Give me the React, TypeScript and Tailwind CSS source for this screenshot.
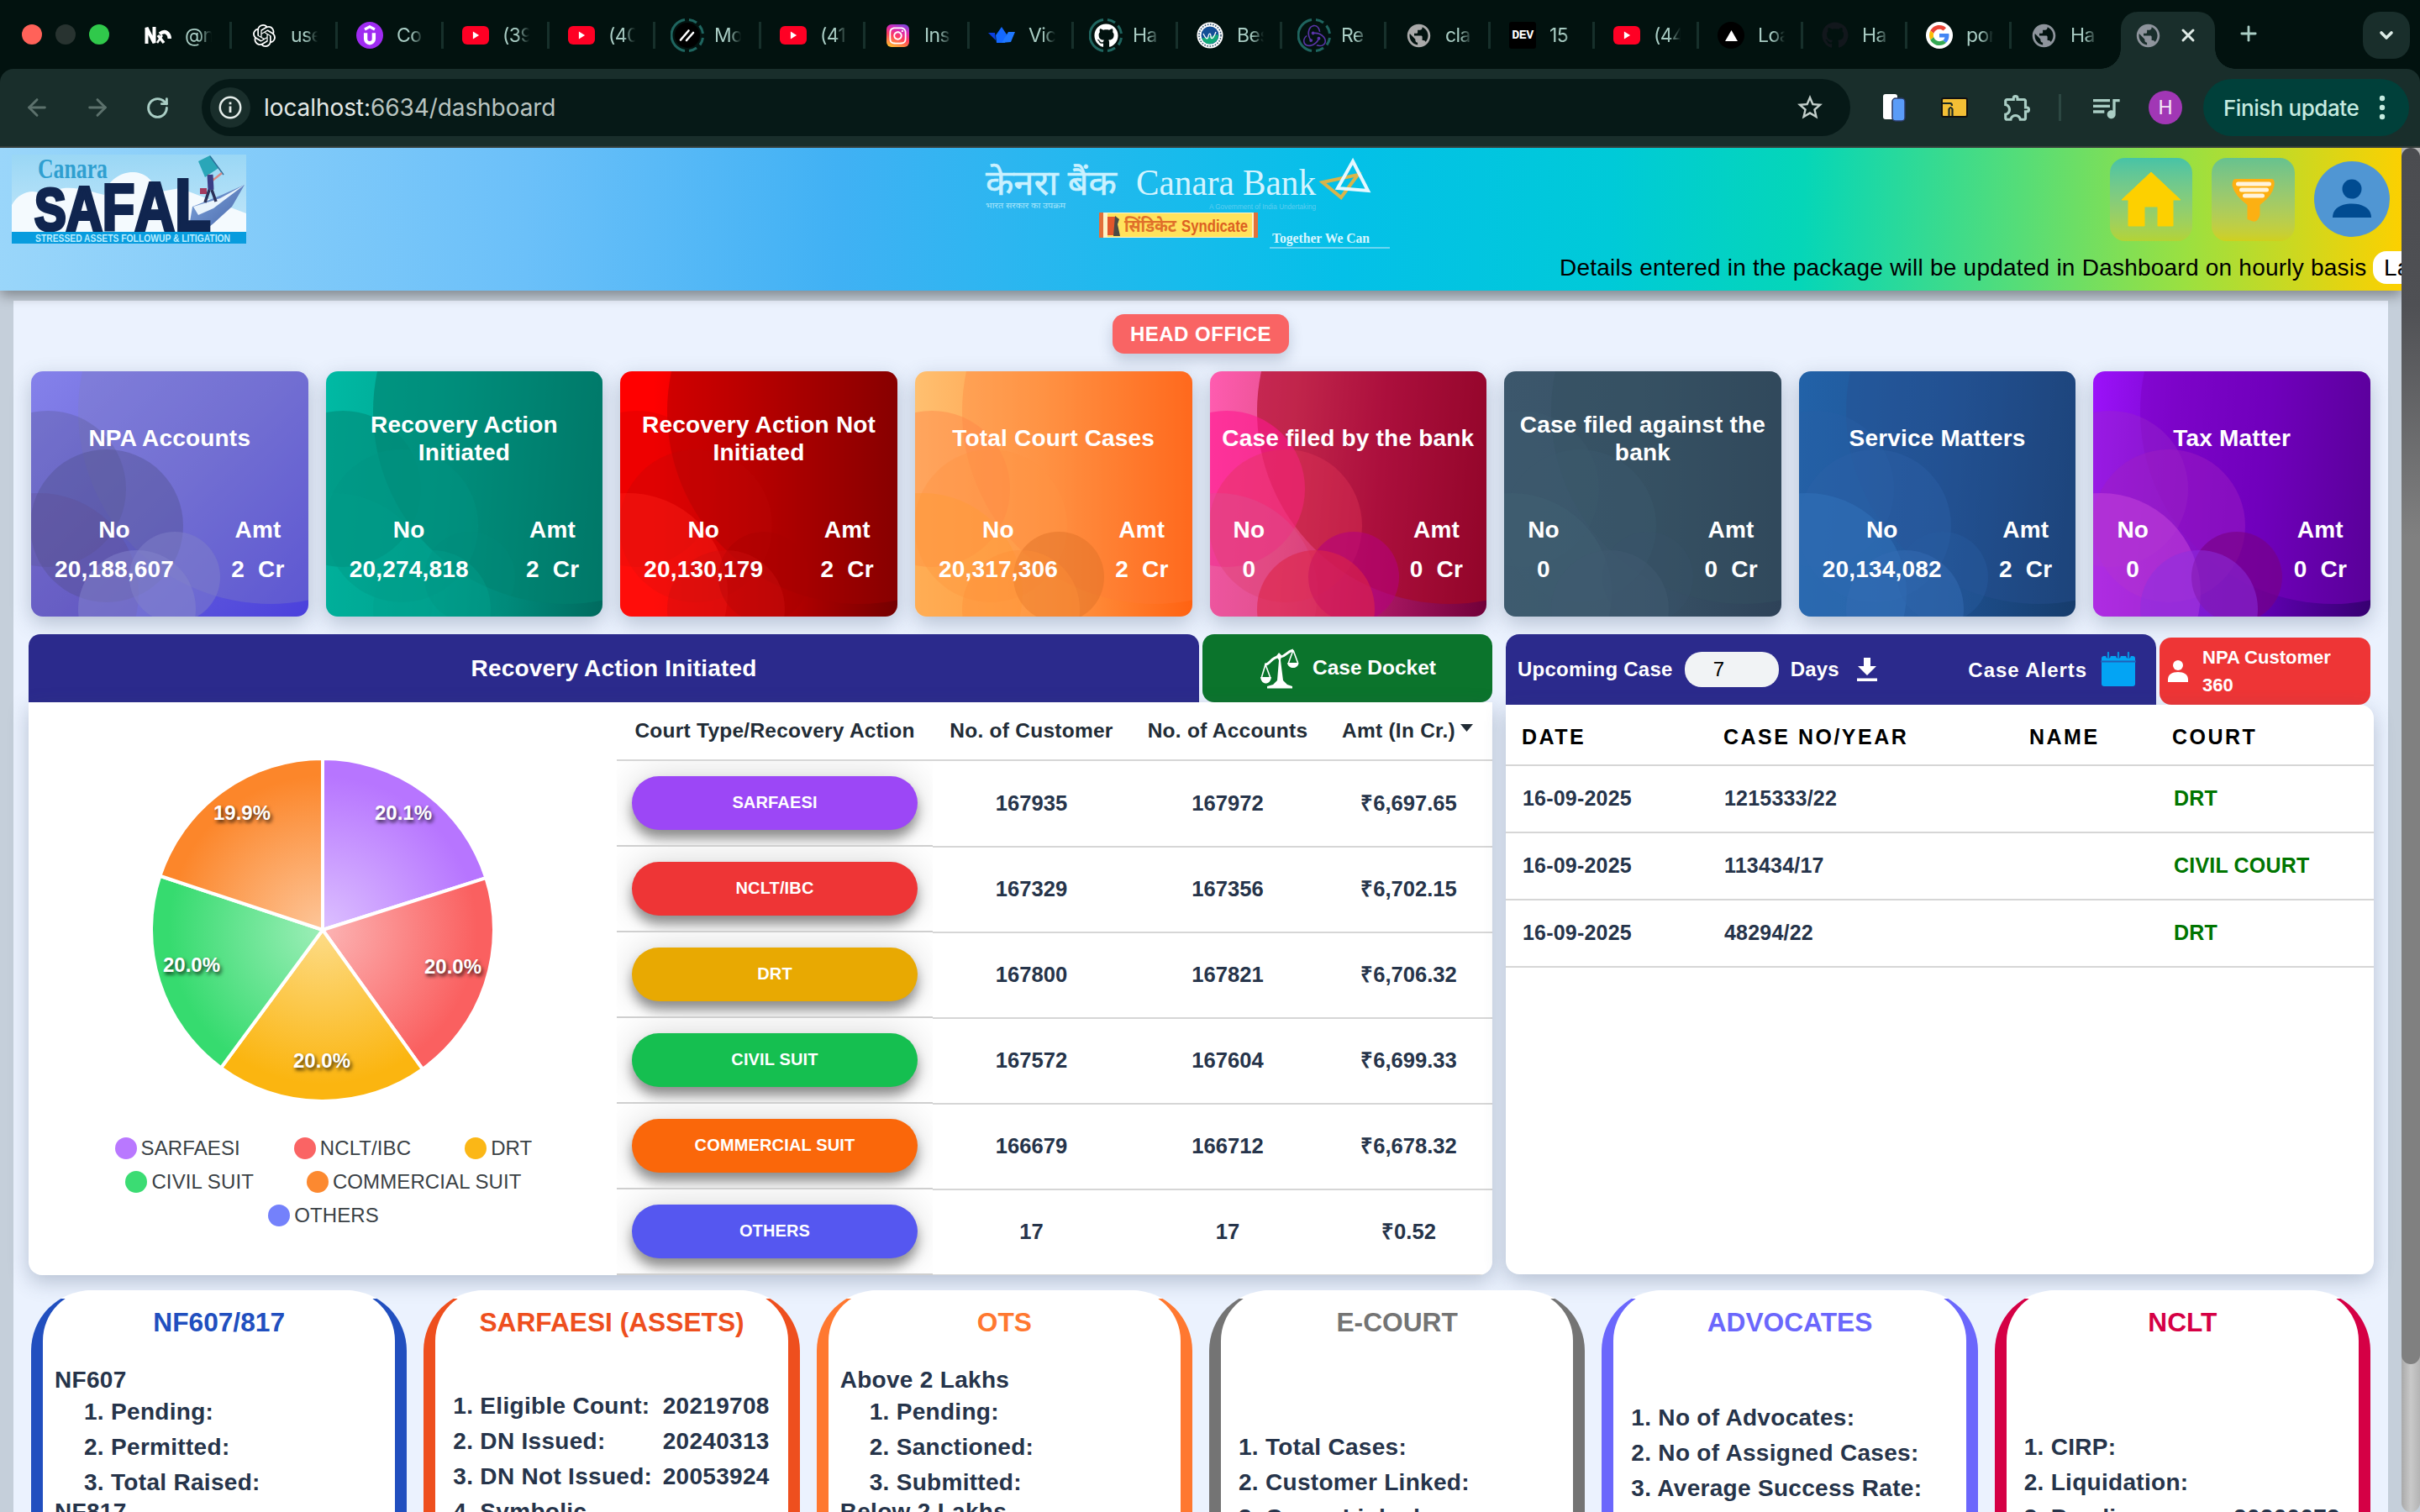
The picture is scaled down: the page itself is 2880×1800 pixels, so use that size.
import React from "react";
import { FaGithub, FaInstagram } from "react-icons/fa";
import { MdPublic, MdOutlineExtension, MdStarBorder, MdQueueMusic } from "react-icons/md";
import { SiOpenai, SiRedux } from "react-icons/si";
import { ArrowLeft, ArrowRight, RotateCw, X, Plus, ChevronDown } from "lucide-react";

/* ---------- Browser chrome ---------- */

function YouTube() {
  return (
    <div className="flex h-[22px] w-8 items-center justify-center rounded-[6px] bg-[#ff0024]">
      <svg viewBox="0 0 10 10" className="h-[10px] w-[9px]"><path d="M1 0 L9 5 L1 10Z" fill="#fff" /></svg>
    </div>
  );
}

function Ring({ children }: { children: React.ReactNode }) {
  return (
    <div className="relative flex h-10 w-10 shrink-0 items-center justify-center">
      <svg viewBox="0 0 40 40" className="absolute inset-0 h-10 w-10" fill="none" stroke="#1f655f" strokeWidth="3">
        <path d="M17 38.5 A18.7 18.7 0 0 1 17 1.5" />
        <path d="M22 1.5 A18.7 18.7 0 0 1 31 5" />
        <path d="M34.5 8.5 A18.7 18.7 0 0 1 38.5 18" />
        <path d="M38.5 23 A18.7 18.7 0 0 1 35 31.5" />
        <path d="M31 35 A18.7 18.7 0 0 1 22 38.5" />
      </svg>
      {children}
    </div>
  );
}

function GoogleG() {
  return (
    <div className="flex h-8 w-8 items-center justify-center rounded-full bg-white">
      <svg viewBox="0 0 48 48" className="h-6 w-6">
        <path fill="#EA4335" d="M24 9.5c3.54 0 6.71 1.22 9.21 3.6l6.85-6.85C35.9 2.38 30.47 0 24 0 14.62 0 6.51 5.38 2.56 13.22l7.98 6.19C12.43 13.72 17.74 9.5 24 9.5z" />
        <path fill="#4285F4" d="M46.98 24.55c0-1.57-.15-3.09-.38-4.55H24v9.02h12.94c-.58 2.96-2.26 5.48-4.78 7.18l7.73 6c4.51-4.18 7.09-10.36 7.09-17.65z" />
        <path fill="#FBBC05" d="M10.53 28.59c-.48-1.45-.76-2.99-.76-4.59s.27-3.14.76-4.59l-7.98-6.19C.92 16.46 0 20.12 0 24c0 3.88.92 7.54 2.56 10.78l7.97-6.19z" />
        <path fill="#34A853" d="M24 48c6.48 0 11.93-2.13 15.89-5.81l-7.73-6c-2.15 1.45-4.92 2.3-8.16 2.3-6.26 0-11.57-4.22-13.47-9.91l-7.98 6.19C6.51 42.62 14.62 48 24 48z" />
      </svg>
    </div>
  );
}

function Globe({ className }: { className: string }) {
  return <MdPublic className={className} />;
}

const tabs: { label: string; icon: React.ReactNode }[] = [
  {
    label: "@n",
    icon: (
      <svg viewBox="0 0 32 22" className="h-[22px] w-8" fill="none" stroke="#fff">
        <path d="M2.5 21 V2 L11.500 20 V1" strokeWidth="4" />
        <path d="M15 20 L21 11" strokeWidth="2.500" />
        <path d="M16 11 L23 20" strokeWidth="3.500" />
        <path d="M18 9.500 C25 4 29.500 9 29.800 15" strokeWidth="4.500" />
      </svg>
    ),
  },
  { label: "use", icon: <SiOpenai className="h-[27px] w-[27px] text-white" /> },
  {
    label: "Co",
    icon: (
      <div className="flex h-8 w-8 items-center justify-center rounded-full bg-[#a02bf2]">
        <svg viewBox="0 0 24 24" className="h-[26px] w-[26px]" fill="none" stroke="#fff" strokeWidth="4">
          <path d="M6.500 5.500 L12 2.600 L17.500 5.500" strokeWidth="3" />
          <path d="M7.500 9.500 V16 a4.500 4.500 0 0 0 9 0 V9.500" />
        </svg>
      </div>
    ),
  },
  { label: "(39", icon: <YouTube /> },
  { label: "(40", icon: <YouTube /> },
  {
    label: "Mo",
    icon: (
      <Ring>
        <div className="flex h-[30px] w-[30px] items-center justify-center rounded-full bg-black">
          <svg viewBox="0 0 20 16" className="h-4 w-5" stroke="#fff" strokeWidth="2.600" strokeLinecap="round">
            <path d="M2 13.500 L11.500 2.500 M9 14 L17 5" />
          </svg>
        </div>
      </Ring>
    ),
  },
  { label: "(41", icon: <YouTube /> },
  {
    label: "Ins",
    icon: (
      <div className="flex h-[27px] w-[27px] items-center justify-center rounded-[6px] bg-[linear-gradient(20deg,#ffc02e_5%,#ff3a5e_45%,#d829b6_70%,#6a4de8_100%)]">
        <FaInstagram className="h-[23px] w-[23px] text-white" />
      </div>
    ),
  },
  {
    label: "Vic",
    icon: (
      <svg viewBox="0 0 32 20" className="h-5 w-8">
        <path d="M0 7 L8 7 L9 16Z" fill="#0b3fe0" />
        <path d="M10 19 L9 10 L16 0 L22 9 L20 19Z" fill="#1469ff" />
        <path d="M16 19 L24 6 L32 6 L27 18Z" fill="#1f78ff" />
      </svg>
    ),
  },
  { label: "Ha", icon: <Ring><FaGithub className="h-[29px] w-[29px] text-white" /></Ring> },
  {
    label: "Bes",
    icon: (
      <svg viewBox="0 0 32 32" className="h-8 w-8">
        <circle cx="16" cy="16" r="15.500" fill="#fff" />
        <circle cx="16" cy="16" r="13" fill="none" stroke="#35546f" strokeWidth="1.600" strokeDasharray="1.600 1.600" />
        <circle cx="16" cy="16" r="10.500" fill="#134f96" />
        <path d="M6 19 C12 20 18 16 26 15 A10.500 10.500 0 0 1 8 23Z" fill="#12a878" />
        <path d="M8 14 C11 20 13 22 14 17 C15 13 17 13 17 18 C18 22 21 18 23 12" stroke="#fff" strokeWidth="1.300" fill="none" />
      </svg>
    ),
  },
  { label: "Re", icon: <Ring><SiRedux className="h-[27px] w-[27px] text-[#5a35a8]" /></Ring> },
  { label: "cla", icon: <Globe className="h-[33px] w-[33px] text-[#a9a9a9]" /> },
  {
    label: "15",
    icon: (
      <div className="flex h-8 w-8 items-center justify-center rounded-[3px] bg-black font-['Liberation_Mono'] text-[15px] font-bold leading-none tracking-[-0.5px] text-white">
        DEV
      </div>
    ),
  },
  { label: "(44", icon: <YouTube /> },
  {
    label: "Loa",
    icon: (
      <div className="flex h-8 w-8 items-center justify-center rounded-full bg-black">
        <svg viewBox="0 0 16 14" className="h-[13px] w-[15px]"><path d="M8 0 L16 14 H0Z" fill="#fff" /></svg>
      </div>
    ),
  },
  { label: "Ha", icon: <FaGithub className="h-8 w-8 text-[#12171c]" /> },
  { label: "por", icon: <GoogleG /> },
  { label: "Ha", icon: <Globe className="h-[33px] w-[33px] text-[#8e949c]" /> },
];

function TabStrip() {
  return (
    <div className="flex h-[82px] w-full items-start bg-[#02120f]">
      <div className="flex h-[82px] w-[150px] shrink-0 items-center gap-4 pl-[26px]">
        <div className="h-6 w-6 rounded-full bg-[#ff6259]" />
        <div className="h-6 w-6 rounded-full bg-[#283330]" />
        <div className="h-6 w-6 rounded-full bg-[#30c94b]" />
      </div>
      {tabs.map((t, i) => (
        <div key={i} className={(i < 6 ? "w-[126px]" : "w-[124px]") + " flex h-[84px] shrink-0 items-center"}>
          <div className="ml-[18px] flex w-10 justify-center">{t.icon}</div>
          <div className="ml-[12px] w-[34px] overflow-hidden whitespace-nowrap font-[Inter] text-[23px] tracking-[-0.6px] text-[#a9cdc4] [mask-image:linear-gradient(90deg,#000_50%,transparent_95%)]">
            {t.label}
          </div>
          {i < tabs.length - 1 && <div className="ml-auto h-8 w-[3px] bg-[#17302b]" />}
        </div>
      ))}
      <div className="relative ml-[6px] mt-[14px] flex h-[68px] w-[112px] shrink-0 items-center rounded-t-[20px] bg-[#192e2b] pb-3">
        <div className="absolute bottom-0 -left-6 h-6 w-6 bg-[radial-gradient(circle_at_0_0,transparent_23.500px,#192e2b_24px)]" />
        <div className="absolute bottom-0 -right-6 h-6 w-6 bg-[radial-gradient(circle_at_100%_0,transparent_23.500px,#192e2b_24px)]" />
        <Globe className="ml-4 h-[33px] w-[33px] text-[#8e949c]" />
        <X className="ml-[19px] h-6 w-6 text-[#dfeae6]" strokeWidth={3} />
      </div>
      <Plus className="ml-[26px] mt-[26px] h-7 w-7 shrink-0 text-[#a9cdc4]" strokeWidth={2.4} />
      <div className="ml-auto mr-3 mt-[14px] flex h-14 w-14 shrink-0 items-center justify-center rounded-[20px] bg-[#192e2b]">
        <ChevronDown className="h-6 w-6 text-[#dcebe6]" strokeWidth={3.6} />
      </div>
    </div>
  );
}

function Toolbar() {
  return (
    <div className="h-[94px] w-full bg-[#02120f]">
      <div className="flex h-[94px] items-center rounded-t-[16px] border-b-2 border-[#333d3a] bg-[#192e2b]">
        <ArrowLeft className="ml-[28px] h-8 w-8 shrink-0 text-[#5c716c]" strokeWidth={2.2} />
        <ArrowRight className="ml-[40px] h-8 w-8 shrink-0 text-[#5c716c]" strokeWidth={2.2} />
        <RotateCw className="ml-[41px] h-[29px] w-[29px] shrink-0 text-[#a9cdc4]" strokeWidth={2.4} />
        <div className="ml-[38px] flex h-[68px] w-[1962px] shrink-0 items-center rounded-full bg-[#061917]">
          <div className="ml-[10px] flex h-12 w-12 items-center justify-center rounded-full bg-[#192e2b]">
            <svg viewBox="0 0 28 28" className="h-7 w-7" fill="none" stroke="#e6eeeb" strokeWidth="2.500">
              <circle cx="14" cy="14" r="12.200" />
              <path d="M14 12.500 V20" strokeWidth="2.800" />
              <path d="M14 7.500 V10.300" strokeWidth="2.800" />
            </svg>
          </div>
          <div className="ml-[16px] font-[Inter] text-[28px] tracking-[-0.08px] text-[#e2e8e6]">
            localhost:<span className="text-[#b9c4c0]">6634/dashboard</span>
          </div>
          <MdStarBorder className="ml-auto mr-[30px] h-9 w-9 text-[#c3cfcb]" />
        </div>
        <svg viewBox="0 0 28 34" className="ml-[38px] h-[34px] w-[28px] shrink-0">
          <rect x="1" y="1" width="17" height="30" rx="3" fill="#fff" />
          <rect x="12" y="6" width="15" height="27" rx="4" fill="#5a9cf8" stroke="#2b3a66" strokeWidth="1.500" />
        </svg>
        <svg viewBox="0 0 32 24" className="ml-[42px] h-6 w-8 shrink-0">
          <rect x="1" y="1" width="30" height="22" rx="2" fill="#f4bf35" stroke="#111" strokeWidth="2" />
          <path d="M2 7 H11 Q13 7 13 10 M9.500 22 V14 Q11.500 10 13.500 14 V22" stroke="#1b2a26" strokeWidth="2.200" fill="none" />
        </svg>
        <MdOutlineExtension className="ml-[40px] h-[38px] w-[38px] shrink-0 text-[#a9cdc4]" />
        <div className="ml-[30px] h-8 w-[3px] shrink-0 bg-[#2c4742]" />
        <MdQueueMusic className="ml-[33px] h-[40px] w-[40px] shrink-0 text-[#a9cdc4]" />
        <div className="ml-[31px] flex h-10 w-10 shrink-0 items-center justify-center rounded-full bg-[#a137b5] font-[Roboto] text-[24px] text-[#f3e6f5]">H</div>
        <div className="ml-[25px] flex h-[68px] w-[245px] shrink-0 items-center rounded-full bg-[#00403a]">
          <div className="ml-[24px] whitespace-nowrap font-[Inter] text-[26px] font-medium tracking-[-0.45px] text-[#c5ebe0]">Finish update</div>
          <svg viewBox="0 0 8 30" className="ml-auto mr-[28px] h-[30px] w-2" fill="#c5ebe0">
            <circle cx="4" cy="4" r="3.200" /><circle cx="4" cy="15" r="3.200" /><circle cx="4" cy="26" r="3.200" />
          </svg>
        </div>
      </div>
    </div>
  );
}

/* ---------- Application header ---------- */

function SafalLogo() {
  return (
    <svg viewBox="0 0 279 106" className="h-[106px] w-[279px]">
      <defs>
        <linearGradient id="sky" x1="0" y1="0" x2="0" y2="1">
          <stop offset="0" stopColor="#9ad7f5" />
          <stop offset="1" stopColor="#c9e9fa" />
        </linearGradient>
        <linearGradient id="cliff" x1="0" y1="0" x2="1" y2="1">
          <stop offset="0" stopColor="#7fa6dc" />
          <stop offset="1" stopColor="#4563a8" />
        </linearGradient>
      </defs>
      <rect width="279" height="106" fill="url(#sky)" />
      <path d="M0 60 C10 42 30 40 40 50 C60 30 95 45 110 48 C118 15 165 10 172 45 L200 40 L279 70 V94 H0Z" fill="#f4fafe" />
      <path d="M215 62 L250 48 L277 36 L262 62 L240 82 L225 94 L212 80Z" fill="url(#cliff)" />
      <path d="M216 62 L248 52 L277 36 L240 64 L222 72Z" fill="#eaf4fc" />
      <path d="M222 8 L236 1 L246 16 L230 27Z" fill="#2aa6b8" />
      <path d="M236 2 L252 24" stroke="#2b6f9a" strokeWidth="1.500" />
      <path d="M234 24 L240 30 L250 22" stroke="#d98a86" strokeWidth="2.500" fill="none" />
      <path d="M236 24 L237 42" stroke="#3b3d86" strokeWidth="7" />
      <path d="M235 42 L230 57 M238 42 L243 56" stroke="#2b3157" strokeWidth="3.500" fill="none" />
      <path d="M224 40 h8 v7 h-8z" fill="#a23a5e" />
      <text x="31" y="28" textLength="83" lengthAdjust="spacingAndGlyphs" fontFamily="Liberation Serif" fontSize="33" fontWeight="bold" fill="#2f9fd0">Canara</text>
      <text x="27" y="90" textLength="210" lengthAdjust="spacingAndGlyphs" fontFamily="Liberation Sans" fontWeight="bold" fill="#10254f" stroke="#10254f" strokeWidth="4">
        <tspan fontSize="70">S</tspan><tspan fontSize="74">A</tspan><tspan fontSize="78">F</tspan><tspan fontSize="82">A</tspan><tspan fontSize="87">L</tspan>
      </text>
      <rect y="92" width="279" height="14" fill="#089cde" />
      <text x="28" y="104" textLength="232" lengthAdjust="spacingAndGlyphs" fontFamily="Liberation Sans" fontSize="12" fontWeight="bold" fill="#b9ecff">STRESSED ASSETS FOLLOWUP &amp; LITIGATION</text>
    </svg>
  );
}

function CanaraLogo() {
  return (
    <svg viewBox="0 0 490 112" className="h-[112px] w-[490px]">
      <text x="5" y="48" textLength="156" lengthAdjust="spacingAndGlyphs" fontFamily="'Noto Sans Devanagari','Noto Serif Devanagari','Noto Sans',sans-serif" fontSize="41" fill="#c9f1ff" stroke="#c9f1ff" strokeWidth="0.600">केनरा बैंक</text>
      <text x="184" y="48" textLength="214" lengthAdjust="spacingAndGlyphs" fontFamily="Liberation Serif" fontSize="44" fill="#d4f4ff">Canara Bank</text>
      <path d="M406 33 L448 24 L428 51Z" fill="none" stroke="#d9b44a" strokeWidth="4" />
      <path d="M442 8 L460 43 L424 40Z" fill="none" stroke="#e6f8ff" strokeWidth="4" />
      <text x="5" y="64" textLength="95" lengthAdjust="spacingAndGlyphs" fontFamily="'Noto Sans Devanagari','Noto Sans',sans-serif" fontSize="9" fill="#a9e6fb">भारत सरकार का उपक्रम</text>
      <text x="271" y="65" textLength="127" lengthAdjust="spacingAndGlyphs" fontFamily="Liberation Sans" fontSize="9" fill="#5fcdf0">A Government of India Undertaking</text>
      <rect x="140" y="69" width="189" height="30" fill="#e2703a" />
      <rect x="145" y="69" width="179" height="30" fill="#fdf2c8" />
      <rect x="150" y="70" width="172" height="28" fill="#ffe25c" />
      <rect x="150" y="74" width="9" height="22" fill="#e2572b" />
      <path d="M159 73 l5 4 l-2 6 l3 14 h-8z" fill="#4b4a46" />
      <text x="170" y="92" textLength="62" lengthAdjust="spacingAndGlyphs" fontFamily="'Noto Sans Devanagari','Noto Sans',sans-serif" fontSize="21" fontWeight="bold" fill="#e0702a">सिंडिकेट</text>
      <text x="238" y="92" textLength="79" lengthAdjust="spacingAndGlyphs" fontFamily="Liberation Sans" fontSize="20" fontWeight="bold" fill="#dc6022">Syndicate</text>
      <text x="346" y="105" textLength="116" lengthAdjust="spacingAndGlyphs" fontFamily="Liberation Serif" fontSize="16" fontWeight="bold" fill="#d9f6ff">Together We Can</text>
      <path d="M343 111 H486" stroke="#8fdcf5" strokeWidth="1.500" />
    </svg>
  );
}

function Header() {
  return (
    <header className="relative z-10 h-[170px] w-full shrink-0 bg-[linear-gradient(92deg,#9ad6fa_0%,#6bc0f9_22%,#40b1f4_35%,#04c0e8_56%,#00cad8_67%,#05d6b8_75%,#55dd78_84%,#9be040_91%,#fdd000_100%)] shadow-[0_6px_14px_rgba(0,0,0,0.35)]">
      <div className="flex justify-between">
        <div className="w-[640px] pl-[14px] pt-2"><SafalLogo /></div>
        <div className="mr-[32px] pt-2"><CanaraLogo /></div>
        <div className="flex w-[640px] justify-end pt-3">
          <div className="h-[99px] w-[98px] rounded-[18px] bg-linear-to-b from-[#46c3a6] to-[#b3d334]">
            <svg viewBox="0 0 98 99" className="h-[99px] w-[98px]">
              <path d="M49 17 L84 50 H75 V81 H57 V58 H41 V81 H22 V50 H14Z" fill="#fdd000" stroke="#fdd000" strokeLinejoin="round" />
            </svg>
          </div>
          <div className="ml-[23px] h-[99px] w-[99px] rounded-[18px] bg-linear-to-b from-[#66c28f] to-[#cfd01d]">
            <svg viewBox="0 0 98 99" className="h-[99px] w-[99px]">
              <path d="M28 25 H71 Q75 25 74 33 Q72 45 57 56 V68 Q54 78 47 75 L42 73 V56 Q27 45 24 33 Q24 25 28 25Z" fill="#fcb012" />
              <path d="M31 31 H68 M35 38 H65 M39 45 H60" stroke="#fff4dc" strokeWidth="5" strokeLinecap="round" />
            </svg>
          </div>
          <div className="ml-[23px] mr-[14px] mt-[4px] h-[90px] w-[90px] shrink-0 rounded-full bg-[#5096d3]">
            <svg viewBox="0 0 90 90" className="h-[90px] w-[90px]" fill="#004b91">
              <circle cx="45" cy="33" r="11.500" />
              <path d="M22 67 C22 56 32 50.500 45 50.500 S68 56 68 67Z" />
            </svg>
          </div>
        </div>
      </div>
      <div className="absolute inset-x-0 top-[122px] flex h-[40px] items-center overflow-hidden whitespace-nowrap pl-[1856px] pt-px font-['Liberation_Sans'] text-[28px] tracking-[0.23px] text-black">
        <span className="w-[968px] shrink-0">Details entered in the package will be updated in Dashboard on hourly basis</span>
        <span className="rounded-l-[16px] bg-white py-[4px] pl-[13px] pr-10 leading-[31px]">Last Updated</span>
      </div>
    </header>
  );
}

/* ---------- Summary cards ---------- */

type Stat = { title: string; no: string; amt: string; bg: string; c: [string, string, string, string, string, string] };

const stats: Stat[] = [
  {
    title: "NPA Accounts", no: "20,188,607", amt: "2",
    bg: "bg-[linear-gradient(135deg,#8582ea_0%,#6b66dc_50%,#4a40dc_100%)]",
    c: ["bg-[#8080c0]/35", "bg-[#55558a]/30", "bg-[#50508c]/40", "bg-[#604c90]/30", "bg-[#8080c8]/50", "bg-[#8484cc]/50"],
  },
  {
    title: "Recovery Action Initiated", no: "20,274,818", amt: "2",
    bg: "bg-[linear-gradient(95deg,#00baa4_0%,#00a592_40%,#008374_75%,#006a5e_100%)]",
    c: ["bg-[#00806e]/60", "bg-[#008a78]/60", "bg-[#009482]/40", "bg-[#009e8a]/30", "bg-[#008c7a]/30", "bg-[#00a08c]/40"],
  },
  {
    title: "Recovery Action Not Initiated", no: "20,130,179", amt: "2",
    bg: "bg-[linear-gradient(90deg,#ff0000_0%,#ff0000_12%,#d80000_40%,#740000_100%)]",
    c: ["bg-[#a00000]/45", "bg-[#c80000]/30", "bg-[#bc0808]/30", "bg-[#ff2018]/40", "bg-[#a80000]/40", "bg-[#cc1010]/40"],
  },
  {
    title: "Total Court Cases", no: "20,317,306", amt: "2",
    bg: "bg-[linear-gradient(90deg,#ffc070_0%,#ff9e4a_45%,#ff6212_100%)]",
    c: ["bg-[#ff7a38]/30", "bg-[#ff8448]/45", "bg-[#ff9444]/40", "bg-[#ff9a38]/50", "bg-[#e07228]/50", "bg-[#ff8e38]/40"],
  },
  {
    title: "Case filed by the bank", no: "0", amt: "0",
    bg: "bg-[linear-gradient(95deg,#ff5cb0_0%,#e4508c_30%,#b01a68_60%,#700038_100%)]",
    c: ["bg-[#a80820]/60", "bg-[#ff1890]/60", "bg-[#e03458]/40", "bg-[#dc5090]/40", "bg-[#b4007c]/60", "bg-[#dc2448]/60"],
  },
  {
    title: "Case filed against the bank", no: "0", amt: "0",
    bg: "bg-[linear-gradient(90deg,#3c576c_0%,#385266_50%,#2e4258_100%)]",
    c: ["bg-[#34505f]/50", "bg-[#3e5c70]/30", "bg-[#3d5b6e]/40", "bg-[#3f5f72]/50", "bg-[#38546a]/30", "bg-[#3f5a70]/50"],
  },
  {
    title: "Service Matters", no: "20,134,082", amt: "2",
    bg: "bg-[linear-gradient(95deg,#2262a8_0%,#1f5394_50%,#163c6c_100%)]",
    c: ["bg-[#285090]/40", "bg-[#285ea4]/40", "bg-[#2c62a8]/40", "bg-[#3070b8]/60", "bg-[#285ca0]/40", "bg-[#346cb4]/50"],
  },
  {
    title: "Tax Matter", no: "0", amt: "0",
    bg: "bg-[linear-gradient(95deg,#9c12fa_0%,#7c08d0_30%,#6400b8_60%,#360070_100%)]",
    c: ["bg-[#7c00c0]/50", "bg-[#9828c8]/40", "bg-[#a020c0]/45", "bg-[#c040d8]/60", "bg-[#780080]/60", "bg-[#8c30e0]/50"],
  },
];

function StatCard({ s }: { s: Stat }) {
  return (
    <div className={s.bg + " relative h-[292px] overflow-hidden rounded-[14px] font-bold text-white"}>
      <div className={s.c[0] + " absolute left-[56px] top-[-181px] h-[458px] w-[458px] rounded-full"} />
      <div className={s.c[1] + " absolute left-[-73px] top-[47px] h-[186px] w-[186px] rounded-full"} />
      <div className={s.c[2] + " absolute left-[-1px] top-[93px] h-[182px] w-[182px] rounded-full"} />
      <div className={s.c[3] + " absolute left-[-110px] top-[145px] h-[238px] w-[238px] rounded-full"} />
      <div className={s.c[4] + " absolute left-[117px] top-[191px] h-[108px] w-[108px] rounded-full"} />
      <div className={s.c[5] + " absolute left-[56px] top-[213px] h-[140px] w-[140px] rounded-full"} />
      <div className="relative flex h-full flex-col text-[28px] tracking-[0.2px]">
        <div className="mt-5 flex h-[119px] items-center justify-center px-[8px] text-center leading-[33px]">{s.title}</div>
        <div className="mt-[26px] flex justify-between px-[28px] text-center leading-[47px]">
          <div><div>No</div><div>{s.no}</div></div>
          <div><div>Amt</div><div>{s.amt}&nbsp;&nbsp;Cr</div></div>
        </div>
      </div>
    </div>
  );
}

/* ---------- Recovery panel ---------- */

const slices = [
  { v: 20.1, t: "20.1%", id: "g1", from: "#dcc0ff", to: "#b775ff", x: 298, y: 65 },
  { v: 20, t: "20.0%", id: "g2", from: "#fcb4b4", to: "#fa6060", x: 357, y: 248 },
  { v: 20, t: "20.0%", id: "g3", from: "#fddc88", to: "#fbb510", x: 201, y: 360 },
  { v: 20, t: "20.0%", id: "g4", from: "#9deeb8", to: "#36db6f", x: 46, y: 246 },
  { v: 19.9, t: "19.9%", id: "g5", from: "#fdc69a", to: "#fc862a", x: 106, y: 65 },
];

function Pie() {
  let a = 0;
  const pt = (f: number) => {
    const r = f * Math.PI * 2 - Math.PI / 2;
    return `${204 + 204 * Math.cos(r)} ${204 + 204 * Math.sin(r)}`;
  };
  return (
    <svg viewBox="0 0 408 408" className="h-[408px] w-[408px] overflow-visible">
      <defs>
        {slices.map((s) => (
          <radialGradient key={s.id} id={s.id} gradientUnits="userSpaceOnUse" cx="204" cy="204" r="204">
            <stop offset="0" stopColor={s.from} />
            <stop offset="0.900" stopColor={s.to} />
          </radialGradient>
        ))}
      </defs>
      {slices.map((s) => {
        const from = a;
        a += s.v / 100;
        return (
          <path key={s.id} d={`M204 204 L${pt(from)} A204 204 0 0 1 ${pt(a)}Z`} fill={`url(#${s.id})`} stroke="#fff" strokeWidth="4" strokeLinejoin="round" />
        );
      })}
      {slices.map((s) => (
        <text key={s.id} x={s.x + 2} y={s.y + 8} textAnchor="middle" fontFamily="Liberation Sans" fontSize="24" fontWeight="bold" fill="#fff" className="[text-shadow:2px_3px_4px_rgba(0,0,0,0.75)]">
          {s.t}
        </text>
      ))}
    </svg>
  );
}

function LegendItem({ c, children }: { c: string; children: React.ReactNode }) {
  return (
    <div className="flex h-10 items-center gap-[5px]">
      <span className={c + " h-[26px] w-[26px] rounded-full"} />
      <span>{children}</span>
    </div>
  );
}

const rows = [
  { n: "SARFAESI", c: "bg-[#9c47f6]", a: "167935", b: "167972", m: "₹6,697.65" },
  { n: "NCLT/IBC", c: "bg-[#ee3536]", a: "167329", b: "167356", m: "₹6,702.15" },
  { n: "DRT", c: "bg-[#e8a902]", a: "167800", b: "167821", m: "₹6,706.32" },
  { n: "CIVIL SUIT", c: "bg-[#15bf50]", a: "167572", b: "167604", m: "₹6,699.33" },
  { n: "COMMERCIAL SUIT", c: "bg-[#fa670a]", a: "166679", b: "166712", m: "₹6,678.32" },
  { n: "OTHERS", c: "bg-[#5557f0]", a: "17", b: "17", m: "₹0.52" },
];

function ScalesIcon() {
  return (
    <svg viewBox="0 0 46 48" className="h-[48px] w-[46px]">
      <g fill="none" stroke="#fff">
        <path d="M5 19 C12 20 12 10 22 10 C30 11 30 4 39 2" strokeWidth="3" />
        <path d="M6 19 L1.500 34 M6 19 L11.500 34" strokeWidth="1.600" />
        <path d="M39 2 L33.500 17 M39 2 L44.500 17" strokeWidth="1.600" />
      </g>
      <path d="M0 34 H13 C12 44 1 44 0 34Z M32 17 H45.500 C45 25 33 25 32 17Z" fill="#fff" />
      <path d="M22 5 L25 8 L24 14 L27 38 L32 43 L38 45 V47.500 H8 V45 L15 43 L20 38 L22 14 L19 9Z" fill="#fff" />
    </svg>
  );
}

function RecoveryPanel() {
  return (
    <section className="flex w-[1742px] shrink-0 flex-col">
      <div className="flex h-[81px] gap-1">
        <div className="flex w-[1393px] items-center justify-center rounded-t-[14px] bg-[#2b2a8c] text-[28px] font-bold tracking-[0.2px] text-white">
          Recovery Action Initiated
        </div>
        <div className="flex flex-1 items-center justify-center gap-[16px] rounded-[14px] bg-[#0b742c] pl-[2px] text-[24.500px] font-bold text-white">
          <ScalesIcon />
          Case Docket
        </div>
      </div>
      <div className="flex h-[682px] rounded-b-[16px] bg-white shadow-[0_8px_24px_rgba(60,80,110,0.3)]">
        <div className="flex w-[700px] flex-col items-center pt-[67px]">
          <Pie />
          <div className="mt-[36px] pl-[2px] text-[24px] tracking-[0.1px] text-[#3a4145]">
            <div className="flex justify-center gap-[64px]">
              <LegendItem c="bg-[#b978ff]">SARFAESI</LegendItem>
              <LegendItem c="bg-[#fa6464]">NCLT/IBC</LegendItem>
              <LegendItem c="bg-[#fbb716]">DRT</LegendItem>
            </div>
            <div className="flex justify-center gap-[63px]">
              <LegendItem c="bg-[#3bdc73]">CIVIL SUIT</LegendItem>
              <LegendItem c="bg-[#fc8930]">COMMERCIAL SUIT</LegendItem>
            </div>
            <div className="flex justify-center">
              <LegendItem c="bg-[#7481fb]">OTHERS</LegendItem>
            </div>
          </div>
        </div>
        <div className="flex-1 overflow-hidden rounded-br-[16px] font-bold text-[#26344a]">
          <div className="grid h-[70px] grid-cols-[376px_235px_232px_199px] items-center border-b-2 border-[#d6d6d6] text-center text-[24.500px] tracking-[0.25px] text-[#222c36]">
            <div>Court Type/Recovery Action</div>
            <div>No. of Customer</div>
            <div>No. of Accounts</div>
            <div className="flex items-center justify-center gap-[6px] whitespace-nowrap pr-[3px]">
              Amt (In Cr.)
              <svg viewBox="0 0 15 9" className="mb-2 h-[9px] w-[15px]"><path d="M0 0 H15 L7.500 9Z" fill="#222c36" /></svg>
            </div>
          </div>
          {rows.map((r) => (
            <div key={r.n} className="grid h-[102px] grid-cols-[376px_235px_232px_199px] text-center text-[25.600px] leading-[101px]">
              <div className="h-[102px] overflow-hidden border-b-2 border-[#cfcfcf] px-[18px] pt-[18px]">
                <div className={r.c + " h-16 w-[340px] rounded-full text-[20px] leading-[63px] tracking-[0.15px] text-white shadow-[0_10px_14px_rgba(0,0,0,0.4),0_0_44px_rgba(0,0,0,0.16)]"}>{r.n}</div>
              </div>
              <div className="h-[103px] border-b-2 border-[#d6d6d6]">{r.a}</div>
              <div className="h-[103px] border-b-2 border-[#d6d6d6]">{r.b}</div>
              <div className="h-[103px] border-b-2 border-[#d6d6d6]">{r.m}</div>
            </div>
          ))}
        </div>
      </div>
    </section>
  );
}

/* ---------- Upcoming cases panel ---------- */

const cases = [
  ["16-09-2025", "1215333/22", "", "DRT"],
  ["16-09-2025", "113434/17", "", "CIVIL COURT"],
  ["16-09-2025", "48294/22", "", "DRT"],
];

function CasesPanel() {
  return (
    <section className="ml-4 flex w-[1033px] shrink-0 flex-col">
      <div className="flex h-[84px] gap-1">
        <div className="flex w-[774px] items-center rounded-t-[16px] bg-[#2b2a8c] text-[24px] font-bold text-white">
          <span className="ml-[14px] tracking-[0.25px]">Upcoming Case</span>
          <span className="ml-[14px] h-[42px] w-[112px] rounded-[20px] bg-[#f1f3f5] pl-[34px] text-[24px] font-normal leading-[42px] text-black">7</span>
          <span className="ml-[14px] tracking-[0.2px]">Days</span>
          <svg viewBox="0 0 24 28" className="ml-[21px] h-7 w-6" fill="#fff"><path d="M8 0 H16 V10 H23 L12 21 L1 10 H8Z M0 24.500 H24 V28 H0Z" /></svg>
          <span className="ml-auto mt-[2px] tracking-[0.95px]">Case Alerts</span>
          <svg viewBox="0 0 42 42" className="ml-[16px] mr-[24px] h-[42px] w-[42px]">
            <rect x="1" y="5" width="40" height="36" rx="3" fill="#03a4f4" />
            <path d="M0 11.500 H42" stroke="#2160b8" strokeWidth="2" />
            <path d="M9 1 V5 M21 1 V5 M33 1 V5" stroke="#2b2a8c" strokeWidth="5.500" strokeLinecap="round" />
            <path d="M9 1 V7 M21 1 V7 M33 1 V7" stroke="#0a8ee0" strokeWidth="2.200" strokeLinecap="round" />
          </svg>
        </div>
        <div className="mt-1 flex h-20 w-[251px] items-center rounded-[14px] bg-[#ee3536] pb-px text-[22px] font-bold leading-[33px] text-white">
          <svg viewBox="0 0 24 26" className="ml-[10px] h-[26px] w-6" fill="#fff"><circle cx="12" cy="6" r="6" /><path d="M0 26 V23 C0 17 5 14 12 14 S24 17 24 23 V26Z" /></svg>
          <span className="ml-[17px] w-[170px]">NPA Customer 360</span>
        </div>
      </div>
      <div className="flex h-[678px] rounded-b-[16px] rounded-tr-[16px] bg-white shadow-[0_8px_24px_rgba(60,80,110,0.3)]">
        <div className="flex-1 font-bold text-[#26344a]">
          <div className="grid h-[73px] grid-cols-[240px_364px_170px_1fr] items-center border-b-2 border-[#d6d6d6] pl-[19px] pt-[6px] text-[25px] tracking-[2.500px] text-black">
            <div>DATE</div><div>CASE NO/YEAR</div><div>NAME</div><div>COURT</div>
          </div>
          {cases.map((c, i) => (
            <div key={i} className="grid h-20 grid-cols-[240px_364px_171px_1fr] items-center border-b-2 border-[#d6d6d6] pl-[20px] text-[25px] tracking-[0.2px]">
              <div>{c[0]}</div><div>{c[1]}</div><div>{c[2]}</div><div className="text-[#007500]">{c[3]}</div>
            </div>
          ))}
        </div>
      </div>
    </section>
  );
}

/* ---------- Bottom cards ---------- */

function BottomCard({ cls, title, pad, children }: { cls: string; title: string; pad: string; children: React.ReactNode }) {
  return (
    <div className={cls + " h-[420px] overflow-hidden rounded-t-[72px] bg-[linear-gradient(#fff_10px,currentColor_10px)] px-[14px]"}>
      <div className="h-full rounded-t-[60px] bg-white pt-[19px]">
        <div className="text-center text-[31.700px] font-bold leading-[38px]">{title}</div>
        <div className={pad + " mt-px whitespace-pre text-[28px] font-bold leading-[42px] tracking-[0.3px] text-[#26344a]"}>{children}</div>
      </div>
    </div>
  );
}

export default function App() {
  return (
    <div className="flex h-[1800px] w-[2880px] flex-col overflow-hidden bg-[#c5cfda] font-['Liberation_Sans',Arial,sans-serif]">
      <TabStrip />
      <Toolbar />
      <div className="flex h-[1624px]">
        <div className="flex w-[2858px] flex-col overflow-hidden">
          <Header />
          <main className="mx-4 mt-3 flex h-[1442px] shrink-0 flex-col bg-[#ebf2fe]">
            <div className="mt-4 flex justify-center">
              <div className="flex h-[47px] w-[210px] items-center justify-center rounded-[14px] bg-[#f96464] text-[24px] font-bold tracking-[0.5px] text-white shadow-[0_8px_16px_rgba(60,80,110,0.25)]">HEAD OFFICE</div>
            </div>
            <div className="ml-[21px] mt-[21px] grid w-[2784px] grid-cols-8 gap-[21px]">
              {stats.map((s) => (
                <div key={s.title} className="rounded-[14px] shadow-[0_8px_24px_rgba(60,80,110,0.3)]"><StatCard s={s} /></div>
              ))}
            </div>
            <div className="ml-[18px] mt-[21px] flex">
              <RecoveryPanel />
              <CasesPanel />
            </div>
            <div className="ml-[21px] mt-[18px] grid w-[2784px] grid-cols-6 gap-5">
              <BottomCard cls="text-[#214fbf]" title="NF607/817" pad="pt-[28px] pl-[14px]">
                <div className="h-[38px]">NF607</div>
                <div className="pl-[35px]">1. Pending:</div>
                <div className="pl-[35px]">2. Permitted:</div>
                <div className="pl-[35px]">3. Total Raised:</div>
                <div className="-mt-[7px]">NF817</div>
              </BottomCard>
              <BottomCard cls="text-[#ee4f1e]" title="SARFAESI (ASSETS)" pad="pt-[59px] pl-[21px] pr-[22px]">
                <div className="flex justify-between"><span>1. Eligible Count:</span><span>20219708</span></div>
                <div className="flex justify-between"><span>2. DN Issued:</span><span>20240313</span></div>
                <div className="flex justify-between"><span>3. DN Not Issued:</span><span>20053924</span></div>
                <div>4. Symbolic</div>
              </BottomCard>
              <BottomCard cls="text-[#ff7830]" title="OTS" pad="pt-[28px] pl-[14px]">
                <div className="h-[38px]">Above 2 Lakhs</div>
                <div className="pl-[35px]">1. Pending:</div>
                <div className="pl-[35px]">2. Sanctioned:</div>
                <div className="pl-[35px]">3. Submitted:</div>
                <div className="-mt-[7px]">Below 2 Lakhs</div>
              </BottomCard>
              <BottomCard cls="text-[#747474]" title="E-COURT" pad="pt-[108px] pl-[21px]">
                <div>1. Total Cases:</div>
                <div>2. Customer Linked:</div>
                <div>3. Cases Linked:</div>
              </BottomCard>
              <BottomCard cls="text-[#6b67fc]" title="ADVOCATES" pad="pt-[73px] pl-[21px]">
                <div>1. No of Advocates:</div>
                <div>2. No of Assigned Cases:</div>
                <div>3. Average Success Rate:</div>
              </BottomCard>
              <BottomCard cls="text-[#d50045]" title="NCLT" pad="pt-[108px] pl-[21px] pr-[22px]">
                <div>1. CIRP:</div>
                <div>2. Liquidation:</div>
                <div className="flex justify-between"><span>3. Pending:</span><span>20200072</span></div>
              </BottomCard>
            </div>
          </main>
        </div>
        <div className="w-[22px] overflow-hidden rounded-b-full bg-[linear-gradient(90deg,#a9a9a9,#c9c9c9_50%,#b4b4b4)]">
          <div className="h-[1448px] w-[22px] rounded-full bg-[linear-gradient(180deg,#4b4c50_0%,#4f5054_13%,#808080_32%,#808080_100%)]" />
        </div>
      </div>
    </div>
  );
}
